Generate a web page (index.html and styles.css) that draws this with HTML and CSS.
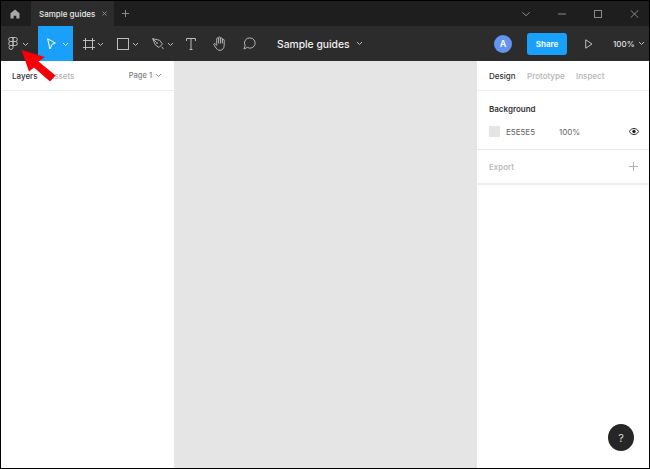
FILE: index.html
```html
<!DOCTYPE html>
<html lang="en">
<head>
<meta charset="utf-8">
<title>Sample guides</title>
<link rel="stylesheet" href="styles.css">
</head>
<body>
<div class="app">
  <header class="titlebar">
    <div class="home">
      <svg width="10" height="10" viewBox="0 0 12 12"><path class="fill-grey" d="M6 .6 11.400 5v6.400H7.600V8H4.400v3.400H.6V5z"/></svg>
    </div>
    <div class="tab"><span class="tab-name">Sample guides</span>
      <svg class="tab-x" width="5" height="5" viewBox="0 0 5 5"><path class="st-dim" d="M.5.5l4 4M4.500.5l-4 4"/></svg>
    </div>
    <svg class="tab-plus" width="7" height="7" viewBox="0 0 7 7"><path class="st-dim" d="M3.500 0v7M0 3.500h7"/></svg>
    <div class="winctl">
      <svg width="8" height="4" viewBox="0 0 8 4"><path class="st-dim" d="M.3.300l3.700 3.400L7.700.300"/></svg>
      <svg width="8" height="2" viewBox="0 0 8 2"><path class="st-dim" d="M0 1h8"/></svg>
      <svg width="8" height="8" viewBox="0 0 8 8"><rect class="st-dim" x=".5" y=".5" width="7" height="7"/></svg>
      <svg width="9" height="8" viewBox="0 0 9 8"><path class="st-dim" d="M.7.300l7.600 7.400M8.300.300L.7 7.700"/></svg>
    </div>
  </header>
  <nav class="toolbar">
    <div class="tool tool-logo">
      <svg width="10" height="13" viewBox="0 0 10 13"><path class="st-light" d="M5 .5H2.700a2 2 0 0 0 0 4H5zM5 .5h2.300a2 2 0 0 1 0 4H5zM5 4.500H2.700a2 2 0 0 0 0 4H5zM5 4.500v4h2.300a2 2 0 0 0 0-4zM5 8.500H2.700a2 2 0 1 0 2.300 2z"/></svg>
      <svg class="caret" width="5" height="3" viewBox="0 0 5 3"><path class="st-light" d="M0 0l2.500 2.500L5 0"/></svg>
    </div>
    <div class="tool tool-move">
      <svg width="9" height="12" viewBox="0 0 9 12"><path class="st-white" d="M.6.800l7.800 4.200-3.400 1.400L3 11z"/></svg>
      <svg class="caret" width="5" height="3" viewBox="0 0 5 3"><path class="st-white" d="M0 0l2.500 2.500L5 0"/></svg>
    </div>
    <div class="tool tool-frame">
      <svg width="12" height="12" viewBox="0 0 12 12"><path class="st-light" d="M2.500 0v12M9.500 0v12M0 2.500h12M0 9.500h12"/></svg>
      <svg class="caret" width="5" height="3" viewBox="0 0 5 3"><path class="st-light" d="M0 0l2.500 2.500L5 0"/></svg>
    </div>
    <div class="tool tool-rect">
      <svg width="12" height="12" viewBox="0 0 12 12"><rect class="st-light" x=".5" y=".5" width="11" height="11"/></svg>
      <svg class="caret" width="5" height="3" viewBox="0 0 5 3"><path class="st-light" d="M0 0l2.500 2.500L5 0"/></svg>
    </div>
    <div class="tool tool-pen">
      <svg width="12" height="12" viewBox="0 0 13 13"><path class="st-light" d="M.7.7l7.600 1.800 3 4-3.800 3.800-4-3zM.7.700l4.300 4.300M10.500 9.500l2 2.500"/><circle class="fill-grey" cx="5.500" cy="5.500" r="1"/></svg>
      <svg class="caret" width="5" height="3" viewBox="0 0 5 3"><path class="st-light" d="M0 0l2.500 2.500L5 0"/></svg>
    </div>
    <div class="tool tool-text">
      <svg width="10" height="12" viewBox="0 0 10 12"><path class="st-light" d="M.5 3V.5h9V3M5 .5v11M3.500 11.500h3"/></svg>
    </div>
    <div class="tool tool-hand">
      <svg width="14" height="15" viewBox="0 0 15 16"><path class="st-light" d="M4 8V3a1 1 0 0 1 2 0V2a1 1 0 0 1 2 0v1a1 1 0 0 1 2 0v1.500a1 1 0 0 1 2 0V10c0 3-2 5.300-4.500 5.300-2 0-3.200-1-4.200-2.500L1 9.500c-.6-1 .7-2 1.500-1.200L4 10zM6 3v5M8 3v5M10 4v4"/></svg>
    </div>
    <div class="tool tool-comment">
      <svg width="13" height="13" viewBox="0 0 14 14"><path class="st-light" d="M7.500 1a5.500 5.500 0 1 1-2.800 10.200L1 13l1.300-3.700A5.500 5.500 0 0 1 7.500 1z"/></svg>
    </div>
    <div class="filename">
      <span>Sample guides</span>
      <svg width="5" height="3" viewBox="0 0 5 3"><path class="st-light" d="M0 0l2.500 2.500L5 0"/></svg>
    </div>
    <div class="avatar">A</div>
    <div class="share">Share</div>
    <svg class="play" width="8" height="10" viewBox="0 0 8 10"><path class="st-light" d="M.7.800l6.300 4.200-6.300 4.200z"/></svg>
    <div class="zoom">
      <span>100%</span>
      <svg width="5" height="3" viewBox="0 0 5 3"><path class="st-light" d="M0 0l2.500 2.500L5 0"/></svg>
    </div>
  </nav>
  <main class="workspace">
    <aside class="left">
      <div class="left-tabs">
        <span class="tab-active">Layers</span>
        <span class="tab-dim assets">Assets</span>
        <span class="page">Page 1
          <svg width="5" height="3" viewBox="0 0 5 3"><path class="st-dim" d="M0 0l2.500 2.500L5 0"/></svg>
        </span>
      </div>
    </aside>
    <div class="canvas"></div>
    <aside class="right">
      <div class="right-tabs">
        <span class="tab-active">Design</span>
        <span class="tab-dim">Prototype</span>
        <span class="tab-dim">Inspect</span>
      </div>
      <section class="bg-section">
        <h2 class="section-title">Background</h2>
        <div class="bg-row">
          <span class="swatch"></span>
          <span class="hex">E5E5E5</span>
          <span class="pct">100%</span>
          <svg class="eye" width="10" height="7" viewBox="0 0 10 7"><path class="st-dark" d="M.4 3.500C1.500 1.500 3 .5 5 .5s3.500 1 4.600 3C8.500 5.500 7 6.500 5 6.500s-3.500-1-4.600-3z"/><circle class="fill-dark" cx="5" cy="3.500" r="1.700"/></svg>
        </div>
      </section>
      <section class="export">
        <span class="export-title">Export</span>
        <svg width="9" height="9" viewBox="0 0 9 9"><path class="st-plus" d="M4.500 0v9M0 4.500h9"/></svg>
      </section>
    </aside>
  </main>
  <div class="help">?</div>
  <svg class="arrow" width="60" height="60" viewBox="0 0 60 60"><path class="fill-red" d="M21.500 50 45 57 38.500 61.500 55.500 75.500 50 81.500 34 67.500 29 71.500z" transform="translate(0 -42)"/></svg>
</div>
</body>
</html>
```

FILE: styles.css
```css
* { box-sizing: border-box; }
html, body { margin: 0; height: 100%; }
body { background: #000; font-family: Inter, "Liberation Sans", sans-serif; overflow: hidden; }
svg { display: block; flex: none; fill: none; }
.st-dim { stroke: #8a8a8a; stroke-width: 1; fill: none; }
.st-light { stroke: #bdbdbd; stroke-width: 1; fill: none; }
.st-white { stroke: #fff; stroke-width: 1; fill: none; }
.st-dark { stroke: #222; stroke-width: 1; fill: none; }
.st-plus { stroke: #b3b3b3; stroke-width: 1; fill: none; }
.fill-grey { fill: #a8a8a8; }
.fill-dark { fill: #222; }
.fill-red { fill: #f60008; }

.app { position: relative; width: 648px; height: 467px; margin: 1px 0 0 1px; display: flex; flex-direction: column; background: #fff; overflow: hidden; }

.titlebar { height: 25px; background: #1e1e1e; display: flex; align-items: center; flex: none; }
.home { width: 30px; display: flex; justify-content: center; padding-right: 3px; }
.tab { width: 83px; height: 25px; background: #2c2c2c; display: flex; align-items: center; padding-left: 8px; }
.tab-name { color: #e8e8e8; font-size: 8px; font-weight: 500; width: 63px; white-space: nowrap; }
.tab-plus { margin-left: 8px; }
.winctl { margin-left: auto; display: flex; align-items: center; gap: 28px; padding-right: 10px; }

.toolbar { height: 35px; background: #2c2c2c; display: flex; align-items: center; flex: none; }
.tool { height: 35px; display: flex; align-items: center; gap: 4px; }
.caret { margin-top: 1px; }
.tool-logo { width: 37px; padding-left: 7px; gap: 5px; }
.tool-move { width: 35px; background: #18a0fb; padding-left: 9px; gap: 7px; }
.tool-frame { width: 34px; padding-left: 10px; gap: 3px; }
.tool-rect { width: 35px; padding-left: 10px; }
.tool-pen { width: 34px; padding-left: 10px; }
.tool-text { width: 30px; padding-left: 10px; }
.tool-hand { width: 30px; padding-left: 7px; }
.tool-comment { width: 41px; padding-left: 7px; }
.filename { display: flex; align-items: center; gap: 7px; color: #f0f0f0; font-size: 10.300px; font-weight: 500; width: 217px; }
.avatar { width: 18px; height: 18px; border-radius: 50%; background: #6295f0; color: #fff; font-size: 9px; font-weight: 600; display: flex; align-items: center; justify-content: center; }
.share { width: 40px; height: 22px; margin-left: 15px; border-radius: 3px; background: #18a0fb; color: #fff; font-size: 8px; font-weight: 600; display: flex; align-items: center; justify-content: center; }
.play { margin-left: 18px; }
.zoom { margin-left: 20px; display: flex; align-items: center; gap: 4px; color: #e0e0e0; font-size: 8px; font-weight: 500; }

.workspace { flex: 1; display: flex; min-height: 0; }
.left { width: 173px; background: #fff; flex: none; }
.canvas { flex: 1; background: #e5e5e5; }
.right { width: 172px; background: #fff; flex: none; }

.left-tabs, .right-tabs { height: 30px; display: flex; align-items: center; border-bottom: 1px solid #ececec; font-size: 8px; font-weight: 500; }
.left-tabs { padding: 0 13px 0 11px; gap: 11px; }
.right-tabs { padding: 0 12px; gap: 11.500px; }
.tab-active { color: #333; }
.tab-dim { color: #b3b3b3; }
.page { margin-left: auto; display: flex; align-items: center; gap: 4px; color: #808080; font-size: 7.500px; }

.bg-section { height: 59px; padding: 13px 12px 0; border-bottom: 1px solid #e8e8e8; }
.section-title { margin: 0; font-size: 8px; font-weight: 600; color: #333; line-height: 11px; }
.bg-row { display: flex; align-items: center; margin-top: 11px; font-size: 8px; color: #666; }
.swatch { width: 11px; height: 11px; background: #e5e5e5; flex: none; }
.hex { margin-left: 6px; width: 53px; }
.eye { margin-left: auto; margin-right: -2px; }
.export { height: 35px; padding: 0 11px 0 12px; display: flex; align-items: center; justify-content: space-between; border-bottom: 2px solid #eee; }
.export-title { font-size: 8px; font-weight: 500; color: #b3b3b3; }

.help { position: absolute; right: 15px; bottom: 17px; width: 26px; height: 27px; border-radius: 50%; background: #262626; color: #ddd; font-size: 11px; display: flex; align-items: center; justify-content: center; }
.arrow { position: absolute; left: -1px; top: 41px; }
```
